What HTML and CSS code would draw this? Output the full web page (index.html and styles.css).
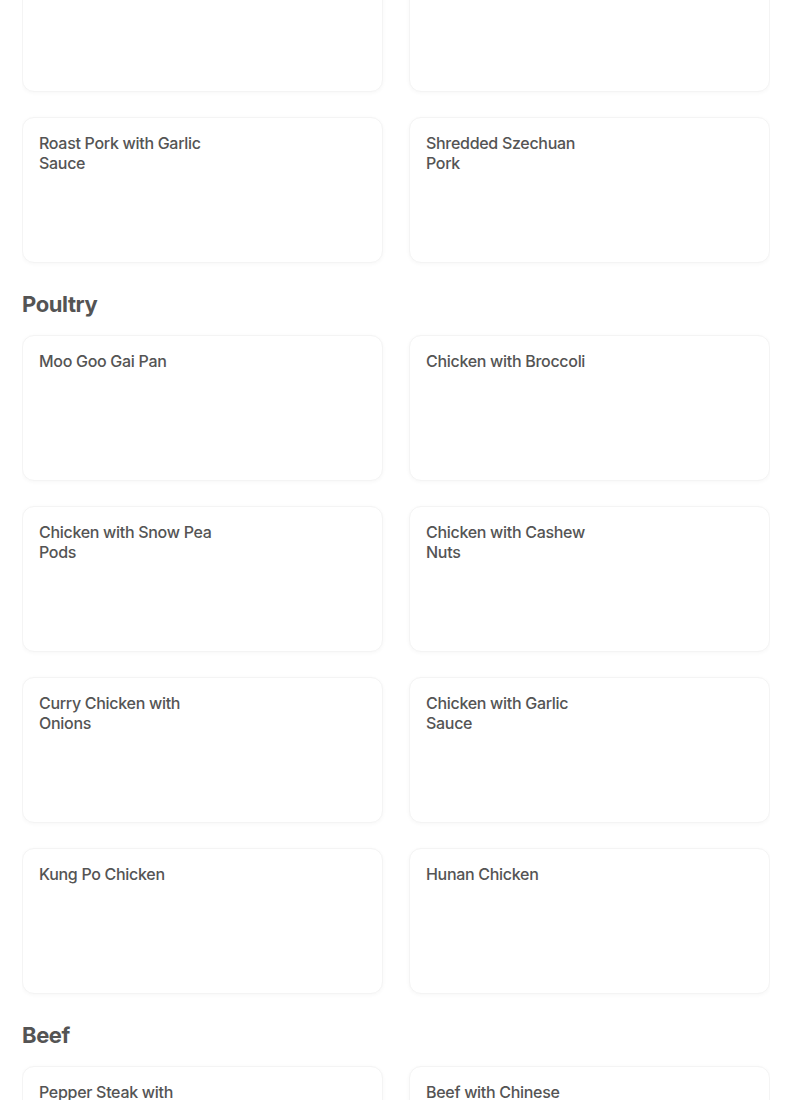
FILE: index.html
```html
<!DOCTYPE html>
<html>
<head>
<meta charset="utf-8">
<link rel="stylesheet" href="styles.css">
</head>
<body>
<div class="menu">
  <section class="section first">
    <div class="grid">
      <div class="card"><div class="title"></div></div>
      <div class="card"><div class="title"></div></div>
      <div class="card"><div class="title">Roast Pork with Garlic Sauce</div></div>
      <div class="card"><div class="title">Shredded Szechuan Pork</div></div>
    </div>
  </section>
  <section class="section">
    <h2 class="heading">Poultry</h2>
    <div class="grid">
      <div class="card"><div class="title">Moo Goo Gai Pan</div></div>
      <div class="card"><div class="title">Chicken with Broccoli</div></div>
      <div class="card"><div class="title">Chicken with Snow Pea Pods</div></div>
      <div class="card"><div class="title">Chicken with Cashew Nuts</div></div>
      <div class="card"><div class="title">Curry Chicken with Onions</div></div>
      <div class="card"><div class="title">Chicken with Garlic Sauce</div></div>
      <div class="card"><div class="title">Kung Po Chicken</div></div>
      <div class="card"><div class="title">Hunan Chicken</div></div>
    </div>
  </section>
  <section class="section">
    <h2 class="heading">Beef</h2>
    <div class="grid">
      <div class="card"><div class="title">Pepper Steak with Onions</div></div>
      <div class="card"><div class="title">Beef with Chinese Vegetables</div></div>
    </div>
  </section>
</div>
</body>
</html>
```
FILE: styles.css
```css
html, body {
  margin: 0;
  padding: 0;
  background: #ffffff;
  font-family: "Inter", "Roboto", "Liberation Sans", sans-serif;
  color: #545454;
}
.menu {
  width: 748px;
  margin-left: 22px;
  overflow: hidden;
  height: 1100px;
}
.section.first {
  margin-top: -54px;
}
.heading {
  margin: 25px 0 15px;
  font-size: 22px;
  line-height: 32px;
  font-weight: 700;
  letter-spacing: -0.4px;
  color: #545454;
}
.grid {
  display: grid;
  grid-template-columns: 361px 361px;
  column-gap: 26px;
  row-gap: 25px;
}
.card {
  box-sizing: border-box;
  height: 146px;
  background: #fff;
  border: 1px solid #f4f4f4;
  border-radius: 12px;
  box-shadow: 0 1px 4px rgba(0,0,0,0.035);
  padding: 15px 16px;
}
.title {
  max-width: 180px;
  font-size: 16px;
  line-height: 20px;
  font-weight: 500;
  letter-spacing: -0.3px;
  color: #545454;
}
```
